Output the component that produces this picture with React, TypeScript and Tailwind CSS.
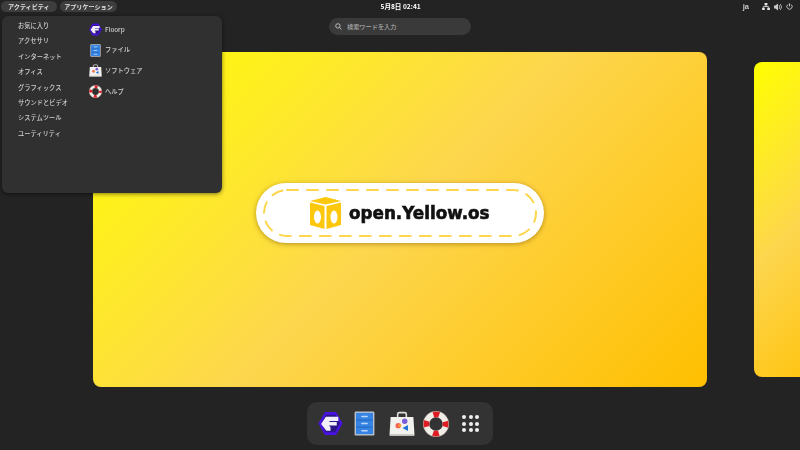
const FloorpIcon = ({ size }: { size: number }) => (
  <svg width={size} height={size} viewBox="0 0 48 48">
    <polygon points="14,3 34,3 46,24 34,45 14,45 2,24" fill="#4a12e6" stroke="#4a12e6" strokeWidth="2" strokeLinejoin="round" />
    <polygon points="15,7 33,7 42,24 33,41 15,41 6,24" fill="#2b1488" />
    <path d="M6 25 L15 11 H39 V19 H23 L21 21 H36 V28 H21 L24 31 V38 H16 Z" fill="#f2effa" />
  </svg>
);

const FilesIcon = ({ size }: { size: number }) => (
  <svg width={size} height={size} viewBox="0 0 48 48">
    <rect x="5" y="1" width="38" height="46" rx="2.5" fill="#c4c8cc" />
    <rect x="7.5" y="3.5" width="33" height="41" fill="#3584e4" />
    <path d="M8 17.5 H40 M8 31 H40" stroke="#1c5fb4" strokeWidth="1.5" />
    <path d="M19 10.5 H29 M19 24 H29 M19 38 H29" stroke="#bcd8f8" strokeWidth="3" strokeLinecap="round" />
  </svg>
);

const SoftwareIcon = ({ size }: { size: number }) => (
  <svg width={size} height={size} viewBox="0 0 48 48">
    <path d="M16 13 V6 a3 3 0 0 1 3-3 h10 a3 3 0 0 1 3 3 V13" fill="none" stroke="#deddda" strokeWidth="3" />
    <path d="M3 11 H45 L47 44 a2 2 0 0 1-2 2 H3 a2 2 0 0 1-2-2 Z" fill="#f2f1ee" />
    <rect x="1" y="43" width="46" height="3" rx="1.5" fill="#c0bfbc" />
    <circle cx="29" cy="19" r="5" fill="#7a5cd6" />
    <circle cx="17" cy="27" r="5" fill="#f66151" />
    <polygon points="35,26 35,37 25,31.5" fill="#1c71d8" />
    <circle cx="20" cy="27" r="2.5" fill="#f5a623" />
  </svg>
);

const HelpIcon = ({ size }: { size: number }) => (
  <svg width={size} height={size} viewBox="0 0 48 48">
    <circle cx="24" cy="24" r="18" fill="none" stroke="#f0ece6" strokeWidth="11" />
    <circle cx="24" cy="24" r="18" fill="none" stroke="#e01b24" strokeWidth="11" strokeDasharray="11 17.27" strokeDashoffset="5.5" />
    <circle cx="24" cy="24" r="23.5" fill="none" stroke="#b5afa5" strokeWidth="1" />
  </svg>
);

const BoxLogo = () => (
  <svg width="31" height="32" viewBox="0 0 31 32">
    <polygon points="15.5,0 31,4 15.5,7.5 0,4" fill="#fdc70c" />
    <polygon points="0,5.5 14.5,9 14.5,32 0,28" fill="#fdc70c" />
    <polygon points="31,5.5 16.5,9 16.5,32 31,28" fill="#fdc70c" />
    <ellipse cx="7.5" cy="20" rx="3.5" ry="6.5" fill="#fff" />
    <ellipse cx="24" cy="20" rx="3.5" ry="6.5" fill="#fff" />
  </svg>
);

const categories = [
  "お気に入り",
  "アクセサリ",
  "インターネット",
  "オフィス",
  "グラフィックス",
  "サウンドとビデオ",
  "システムツール",
  "ユーティリティ",
];

const apps = [
  { name: "Floorp", Icon: FloorpIcon },
  { name: "ファイル", Icon: FilesIcon },
  { name: "ソフトウェア", Icon: SoftwareIcon },
  { name: "ヘルプ", Icon: HelpIcon },
];

const cardGradient = "bg-[linear-gradient(135deg,#ffff00_0%,#fdd64e_50%,#ffbf00_100%)]";

export default function App() {
  return (
    <div className="relative w-[800px] h-[450px] overflow-hidden bg-[#232323] flex flex-col font-['Noto_Sans_CJK_JP',sans-serif]">
      {/* top bar */}
      <div className="h-[13px] shrink-0 relative flex items-center justify-between pl-[1px] text-[6.1px] font-bold text-[#e0e0e0] [will-change:opacity]">
        <div className="flex gap-[3.5px]">
          <div className="h-[11px] px-[7px] rounded-full bg-[#3d3d3d] flex items-center">アクティビティ</div>
          <div className="h-[11px] px-[4px] rounded-full bg-[#3d3d3d] flex items-center">アプリケーション</div>
        </div>
        <div className="absolute left-[380.5px] top-0 h-[13px] flex items-center text-[6.6px] text-white">5月8日 02:41</div>
        <div className="flex items-center gap-[3px] pr-[7px]">
          <span className="mr-[10px] text-[7.5px] text-[#c8c8c8] font-['Liberation_Sans',sans-serif]">ja</span>
          <svg className="mr-[1px]" width="8" height="7" viewBox="0 0 10 9" fill="#e6e6e6">
            <rect x="3.2" y="0" width="3.6" height="3" />
            <rect x="0" y="6" width="3.4" height="3" />
            <rect x="6.6" y="6" width="3.4" height="3" />
            <path d="M4.6 3 H5.4 V4.3 H8.6 V6 H7.8 V5.1 H2.2 V6 H1.4 V4.3 H4.6 Z" />
          </svg>
          <svg width="8" height="8" viewBox="0 0 8 8" fill="#c8c8c8">
            <path d="M0 2.5 H1.5 L4 0.5 V7.5 L1.5 5.5 H0 Z" />
            <path d="M5 2 a3 3 0 0 1 0 4 M6.3 1 a4.5 4.5 0 0 1 0 6" fill="none" stroke="#c8c8c8" strokeWidth="0.8" />
          </svg>
          <svg className="ml-[1px]" width="7" height="7" viewBox="0 0 8 8" fill="none" stroke="#d8d8d8" strokeWidth="1">
            <path d="M2.2 1.7 a3 3 0 1 0 3.6 0" />
            <path d="M4 0.4 V4" />
          </svg>
        </div>
      </div>

      {/* search */}
      <div className="mt-[5px] h-[17px] shrink-0 flex justify-center [will-change:opacity]">
        <div className="w-[142px] rounded-full bg-[#3a3a3a] flex items-center pl-[6px] gap-[5px] text-[6.2px] font-medium text-[#a8a8a8]">
          <svg width="7" height="7" viewBox="0 0 7 7" fill="none" stroke="#c8c8c8" strokeWidth="0.9">
            <circle cx="2.9" cy="2.9" r="2.2" />
            <path d="M4.5 4.5 L6.5 6.5" />
          </svg>
          検索ワードを入力
        </div>
      </div>

      {/* workspaces */}
      <div className="mt-[17px] h-[335px] shrink-0 flex items-center pl-[92.5px] gap-[47px]">
        <div className={`w-[614.5px] h-[335px] shrink-0 rounded-[8px] flex items-center justify-center pb-[13px] ${cardGradient}`}>
          <div className="relative w-[288px] h-[60px] rounded-full bg-white shadow-[0_1px_5px_rgba(120,80,0,0.55)] flex items-center justify-center gap-[8px] [will-change:opacity]">
            <svg className="absolute inset-0" width="288" height="60" viewBox="0 0 288 60" fill="none">
              <rect x="8" y="7" width="272" height="46" rx="23" stroke="#fdd64e" strokeWidth="2" strokeDasharray="11 9" strokeLinecap="round" />
            </svg>
            <BoxLogo />
            <span className="text-[16.8px] font-bold text-[#111] font-['DejaVu_Sans',sans-serif] leading-none [-webkit-text-stroke:0.6px_#111]">open.Yellow.os</span>
          </div>
        </div>
        <div className={`w-[100px] h-[315px] shrink-0 rounded-[8px] ${cardGradient}`} />
      </div>

      {/* dock */}
      <div className="mt-[15px] flex justify-center">
        <div className="w-[186px] h-[43px] rounded-[10px] bg-[#333333] flex items-center pl-[10.5px]">
          <FloorpIcon size={25} />
          <div className="ml-[9.5px]"><FilesIcon size={25} /></div>
          <div className="ml-[11.5px]"><SoftwareIcon size={26} /></div>
          <div className="ml-[8px]"><HelpIcon size={26} /></div>
          <div className="ml-[13.5px] grid grid-cols-3 gap-[2.7px]">
            {Array.from({ length: 9 }).map((_, i) => (
              <div key={i} className="w-[4px] h-[4px] rounded-full bg-[#f0f0f0]" />
            ))}
          </div>
        </div>
      </div>

      {/* applications menu */}
      <div className="absolute left-[2px] top-[16px] w-[220px] h-[177px] rounded-[6px] bg-[#303030] shadow-[0_1px_4px_rgba(0,0,0,0.5)] flex text-[6.25px] font-medium text-[#d0d0d0] [will-change:opacity]">
        <div className="w-[87px] pl-[16px] pt-[2px] shrink-0 flex flex-col">
          {categories.map((c) => (
            <div key={c} className="h-[15.4px] flex items-center">{c}</div>
          ))}
        </div>
        <div className="pt-[3px] flex flex-col">
          {apps.map(({ name, Icon }) => (
            <div key={name} className="h-[20.7px] flex items-center gap-[3px]">
              <Icon size={13} />
              <span>{name}</span>
            </div>
          ))}
        </div>
      </div>
    </div>
  );
}
